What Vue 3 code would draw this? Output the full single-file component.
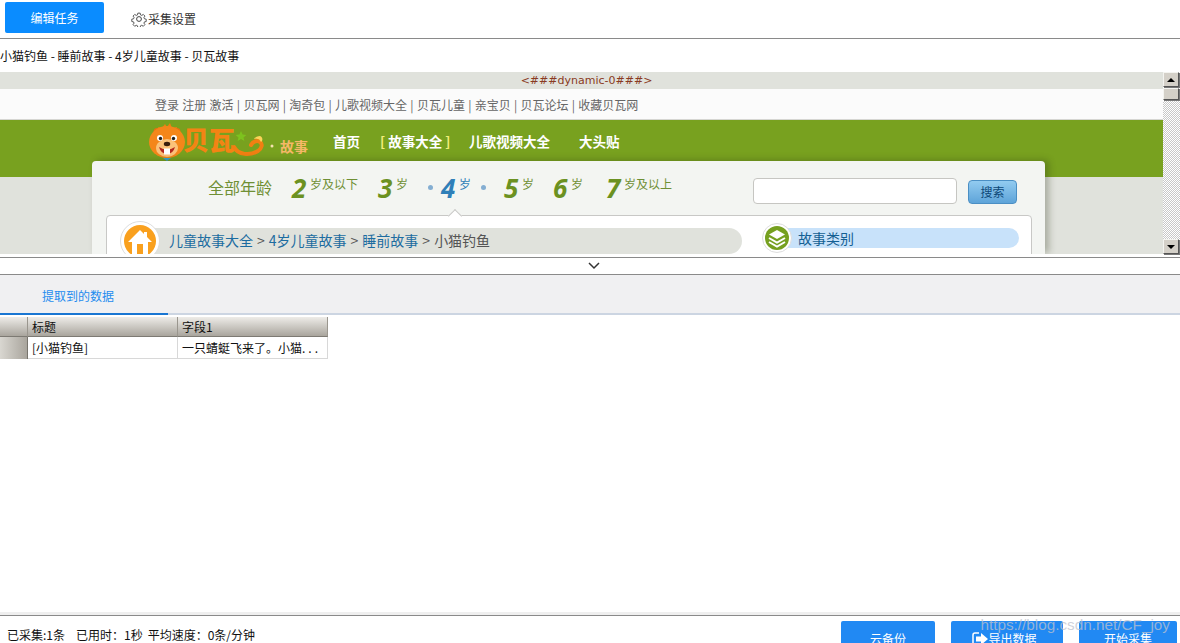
<script setup>
const links = ['贝瓦网', '淘奇包', '儿歌视频大全', '贝瓦儿童', '亲宝贝', '贝瓦论坛', '收藏贝瓦网']
const ages = [
  { n: '2', t: '岁及以下' },
  { n: '3', t: '岁' },
  { dot: true },
  { n: '4', t: '岁', on: true },
  { dot: true },
  { n: '5', t: '岁' },
  { n: '6', t: '岁' },
  { n: '7', t: '岁及以上' }
]
</script>

<template>
  <div class="app">
    <header class="toolbar">
      <button class="edit">编辑任务</button>
      <div class="settings">
        <svg class="gear" width="16" height="16" viewBox="0 0 24 24" fill="none" stroke="#444" stroke-width="1.5" stroke-linejoin="round">
          <path d="M10 2h4l.6 3 2.1.9 2.6-1.7 2.8 2.8-1.7 2.6.9 2.1 3 .6v4l-3 .6-.9 2.1 1.7 2.6-2.8 2.8-2.6-1.7-2.1.9-.6 3h-4l-.6-3-2.1-.9-2.6 1.7-2.8-2.8 1.7-2.6-.9-2.1-3-.6v-4l3-.6.9-2.1-1.7-2.6 2.8-2.8 2.6 1.7 2.1-.9z" transform="translate(12 12) scale(.88) translate(-12 -12)"/>
          <circle cx="12" cy="12" r="3.6"/>
        </svg>
        <span>采集设置</span>
      </div>
    </header>

    <div class="title">小猫钓鱼 - 睡前故事 - 4岁儿童故事 - 贝瓦故事</div>

    <section class="browser">
      <div class="viewport">
        <div class="dynamic">&lt;###dynamic-0###&gt;</div>
        <div class="toplinks">
          <span>登录 注册 激活</span>
          <span v-for="l in links" :key="l"> | {{ l }}</span>
        </div>
        <div class="green">
          <svg class="logo" width="164" height="40" viewBox="0 0 164 40">
            <path d="M22 2l2 5 5-1-1 5H12l-2-5 4 1 3-4 2 3z" fill="#f07f13"/>
            <ellipse cx="9" cy="11" rx="3.5" ry="4" fill="#e96f10"/>
            <ellipse cx="29" cy="11" rx="3.5" ry="4" fill="#e96f10"/>
            <ellipse cx="19" cy="21" rx="18" ry="16" fill="#f4861a"/>
            <ellipse cx="19" cy="27" rx="11" ry="9" fill="#fbc27a"/>
            <circle cx="12" cy="17" r="3" fill="#fff"/>
            <circle cx="26" cy="17" r="3" fill="#fff"/>
            <circle cx="12.5" cy="17.5" r="1.7" fill="#222"/>
            <circle cx="25.5" cy="17.5" r="1.7" fill="#222"/>
            <ellipse cx="19" cy="23" rx="3.2" ry="2.2" fill="#3a1d0c"/>
            <path d="M11 26q8 5 16 0q-2 7-8 7t-8-7z" fill="#b3261e"/>
            <rect x="16" y="27.5" width="6" height="6" fill="#fff"/>
            <path d="M15 37h8l-4 3z" fill="#35a6d8"/>
            <text class="logo-word" x="35" y="29">贝瓦</text>
            <path d="M86 26c4 8 16 9 24 4 4-3 5-7 2-9-2-2-7-1-9 3" fill="none" stroke="#f17f12" stroke-width="4" stroke-linecap="round"/>
            <path d="M112 15c-2 0-5 1-6 3 3-1 6 0 7 3 2-1 2-5-1-6z" fill="#fbd35a"/>
            <path d="M93 10l1.600 3.500 3.800.4-2.900 2.500.9 3.700-3.400-2-3.400 2 .9-3.700-2.900-2.500 3.800-.4z" fill="#7dc21e"/>
            <circle cx="124" cy="25" r="1.500" fill="#f5e3b0"/>
            <text class="logo-sub" x="132" y="31">故事</text>
          </svg>
          <nav class="nav">
            <a>首页</a>
            <a class="cur"><i>[</i> 故事大全 <i>]</i></a>
            <a>儿歌视频大全</a>
            <a>大头贴</a>
          </nav>
        </div>
        <div class="stage">
          <div class="card">
            <div class="ages-row">
              <div class="ages">
                <span class="all">全部年龄</span>
                <template v-for="(a, i) in ages" :key="i">
                  <span v-if="a.dot" class="dot"></span>
                  <span v-else class="age" :class="{ on: a.on }"><b>{{ a.n }}</b><em>{{ a.t }}</em></span>
                </template>
              </div>
              <div class="search">
                <div class="input"></div>
                <button class="go">搜索</button>
              </div>
            </div>
            <div class="panel">
              <span class="notch"></span>
              <div class="crumb">
                <span class="home">
                  <svg width="32" height="32" viewBox="0 0 32 32">
                    <circle cx="16" cy="16" r="16" fill="#f9a01e"/>
                    <path d="M16 5L4 17h4v15h16V17h4L23 12V7h-3v2z" fill="#fff"/>
                    <rect x="13" y="19" width="6" height="13" fill="#f9a01e"/>
                  </svg>
                </span>
                <div class="pill">
                  <a>儿童故事大全</a><s>&gt;</s><a>4岁儿童故事</a><s>&gt;</s><a>睡前故事</a><s>&gt;</s><span>小猫钓鱼</span>
                </div>
              </div>
              <div class="cat">
                <span class="stack">
                  <svg width="24" height="24" viewBox="0 0 24 24">
                    <circle cx="12" cy="12" r="12" fill="#76a020"/>
                    <path d="M12 4l8 4.500-8 4.500-8-4.500z" fill="#fff"/>
                    <path d="M4 12l8 4.500 8-4.500M4 16l8 4.500 8-4.500" fill="none" stroke="#fff" stroke-width="2"/>
                  </svg>
                </span>
                <div class="catpill">故事类别</div>
              </div>
            </div>
          </div>
        </div>
      </div>
      <div class="scrollbar">
        <span class="sb-btn"><i class="up"></i></span>
        <span class="sb-btn thumb"></span>
        <span class="track"></span>
        <span class="sb-btn"><i class="down"></i></span>
      </div>
    </section>

    <div class="collapse">
      <svg width="12" height="8" viewBox="0 0 12 8" fill="none" stroke="#333" stroke-width="1.500"><path d="M1 1l5 5 5-5"/></svg>
    </div>

    <div class="tabs"><div class="tab">提取到的数据</div></div>

    <div class="grid">
      <div class="row head">
        <span class="rh"></span><span class="c">标题</span><span class="c">字段1</span>
      </div>
      <div class="row body">
        <span class="rh"></span><span class="c">[小猫钓鱼]</span><span class="c">一只蜻蜓飞来了。小猫<i class="more">...</i></span>
      </div>
    </div>

    <footer class="status">
      <div class="stats">
        <span>已采集:1条</span>
        <span>已用时：1秒</span>
        <span>平均速度：0条/分钟</span>
      </div>
      <div class="actions">
        <button class="b1">云备份</button>
        <button class="b2">
          <svg width="16" height="16" viewBox="0 0 16 16">
            <path d="M7 2H3a2 2 0 0 0-2 2v8a2 2 0 0 0 2 2h4" fill="none" stroke="#fff" stroke-width="1.500"/>
            <path d="M4 5.500h5V2l7 6-7 6v-3.500H4z" fill="#fff"/>
          </svg>
          <span>导出数据</span>
        </button>
        <button class="b3">开始采集</button>
      </div>
    </footer>
    <div class="watermark">https://blog.csdn.net/CF_joy</div>
  </div>
</template>

<style>
html, body { margin: 0; background: #fff; overflow: hidden; }
</style>

<style scoped>
.app {
  position: relative;
  width: 1180px;
  height: 643px;
  overflow: hidden;
  display: flex;
  flex-direction: column;
  background: #fff;
  color: #111;
  font: 12px/16px "Noto Sans CJK SC", sans-serif;
}
button { font: inherit; border: 0; padding: 0; color: #fff; }

.toolbar {
  height: 38px;
  flex: none;
  display: flex;
  align-items: flex-start;
  padding: 2px 0 0 5px;
  box-sizing: content-box;
  height: 36px;
  border-bottom: 1px solid #8a8a8a;
}
.edit {
  width: 99px;
  height: 31px;
  background: #0a8cff;
  border-radius: 2px;
}
.settings {
  margin: 9px 0 0 27px;
  display: flex;
  align-items: center;
  color: #333;
}
.gear { margin-right: 1px; }

.title {
  height: 33px;
  flex: none;
  line-height: 34px;
  color: #111;
}

.browser {
  height: 182px;
  flex: none;
  display: flex;
}
.viewport {
  width: 1163px;
  overflow: hidden;
  background: #e0e2dc;
}
.dynamic {
  height: 17px;
  line-height: 17px;
  text-align: center;
  color: #8a3a22;
  font: 11px/17px "DejaVu Sans", sans-serif;
  padding-left: 10px;
}
.toplinks {
  height: 30px;
  padding-left: 155px;
  line-height: 31px;
  background: #fbfbfb;
  border-bottom: 1px solid #d6d6d2;
  color: #666;
  word-spacing: .6px;
  white-space: pre;
}
.green {
  height: 57px;
  display: flex;
  align-items: flex-start;
  padding: 1px 0 0 148px;
  box-sizing: border-box;
  background: #78a11f;
}
.logo { flex: none; }
.logo-word { font: 900 26px "Noto Sans CJK SC", sans-serif; fill: #f38414; }
.logo-sub { font: 700 14px "Noto Sans CJK SC", sans-serif; fill: #f5b868; }
.nav {
  display: flex;
  margin: 10px 0 0 21px;
  color: #fff;
  font: 700 13.500px/20px "Noto Sans CJK SC", sans-serif;
}
.nav a { display: block; }
.nav a:nth-child(1) { width: 47px; }
.nav a:nth-child(2) { width: 89px; white-space: pre; }
.nav a:nth-child(3) { width: 110px; }
.nav i { font-style: normal; color: #f3ee7a; }

.stage { margin-top: -16px; padding-left: 92px; }
.card {
  position: relative;
  width: 953px;
  height: 93px;
  background: #f3f5f2;
  border-radius: 4px 4px 0 0;
  box-shadow: 4px -1px 7px rgba(40, 50, 20, .3);
}
.ages-row {
  height: 54px;
  display: flex;
}
.ages {
  display: grid;
  grid-template-columns: 84px 86px 50px 13px 40px 23px 49px 53px auto;
  padding: 15px 0 0 116px;
  width: 645px;
  box-sizing: border-box;
  align-items: start;
}
.all { color: #6f8f34; font-size: 16px; line-height: 22px; }
.age { display: flex; align-items: flex-start; color: #6b9121; white-space: nowrap; }
.age b {
  font: italic 700 26px/24px "Open Sans", sans-serif;
  width: 18px;
  flex: none;
}
.age em { font: normal 12px/16px "Noto Sans CJK SC", sans-serif; color: #6f8f34; }
.age.on, .age.on em { color: #2f7fb8; }
.dot {
  width: 5px;
  height: 5px;
  margin-top: 9px;
  border-radius: 50%;
  background: #84aed2;
}
.search { display: flex; margin-left: 16px; padding-top: 17px; }
.input {
  width: 202px;
  height: 24px;
  background: #fff;
  border: 1px solid #c6c6c2;
  border-radius: 4px;
}
.go {
  margin: 2px 0 0 11px;
  width: 49px;
  height: 24px;
  box-sizing: border-box;
  border: 1px solid #4b8fc4;
  border-radius: 4px;
  background: linear-gradient(#92cbf0, #5ea4d9);
  color: #0d4878;
}
.panel {
  position: relative;
  margin-left: 14px;
  width: 926px;
  height: 60px;
  box-sizing: border-box;
  background: #fff;
  border: 1px solid #c8c8c6;
  border-radius: 4px 4px 0 0;
  display: flex;
}
.notch {
  position: absolute;
  left: 343px;
  top: -5px;
  width: 9px;
  height: 9px;
  background: #fff;
  border: 1px solid #c8c8c6;
  border-width: 1px 0 0 1px;
  transform: rotate(45deg);
}
.crumb { position: relative; display: flex; width: 622px; margin-left: 13px; margin-top: 5px; }
.home {
  position: relative;
  z-index: 1;
  flex: none;
  width: 40px;
  height: 40px;
  box-sizing: border-box;
  padding: 3px;
  background: #fff;
  border: 1px solid #ddd;
  border-radius: 50%;
}
.home svg { display: block; }
.pill {
  margin: 7px 0 0 -20px;
  flex: 1;
  height: 26px;
  padding-left: 29px;
  line-height: 25px;
  font-size: 14px;
  background: #e0e2dc;
  border-radius: 0 13px 13px 0;
  color: #555;
  white-space: nowrap;
}
.pill a { color: #1c6ca0; }
.pill s { text-decoration: none; margin: 0 4px; }
.cat { display: flex; margin: 7px 0 0 20px; }
.stack {
  position: relative;
  z-index: 1;
  flex: none;
  width: 30px;
  height: 30px;
  box-sizing: border-box;
  padding: 2px;
  background: #fff;
  border: 1px solid #ddd;
  border-radius: 50%;
}
.stack svg { display: block; }
.catpill {
  margin: 5px 0 0 -4px;
  width: 231px;
  height: 20px;
  padding-left: 10px;
  box-sizing: border-box;
  background: #c8e2fa;
  border-radius: 0 10px 10px 0;
  font-size: 14px;
  line-height: 20px;
  color: #145f92;
}

.scrollbar {
  width: 17px;
  display: flex;
  flex-direction: column;
}
.sb-btn {
  width: 16px;
  height: 15px;
  flex: none;
  display: flex;
  align-items: center;
  justify-content: center;
  box-sizing: border-box;
  background: #d4d0c8;
  border: 1px solid;
  border-color: #f4f4f0 #555 #555 #f4f4f0;
  box-shadow: 1px 1px 0 #777;
}
.thumb { height: 12px; margin-top: 1px; }
.track {
  flex: 1;
  margin-top: 1px;
  background: repeating-conic-gradient(#c8c8c8 0 25%, #fff 0 50%) 0 0 / 2px 2px;
}
.up, .down { width: 0; height: 0; border: 4px solid transparent; border-left-width: 4px; }
.up { border-bottom: 4px solid #000; border-top-width: 0; }
.down { border-top: 4px solid #000; border-bottom-width: 0; }

.collapse {
  flex: none;
  height: 16px;
  margin-top: 3px;
  border-top: 1px solid #8a8a8a;
  border-bottom: 1px solid #8a8a8a;
  display: flex;
  align-items: center;
  justify-content: center;
  padding-left: 8px;
}
.tabs {
  flex: none;
  height: 38px;
  background: #f0f0f2;
  border-bottom: 2px solid #ccd5e2;
}
.tab {
  width: 168px;
  height: 38px;
  box-sizing: content-box;
  border-bottom: 2px solid #1976d2;
  padding-left: 42px;
  box-sizing: border-box;
  height: 40px;
  line-height: 42px;
  color: #1e8cef;
}
.grid { flex: 1; padding-top: 2px; }
.row { display: flex; width: 328px; }
.rh { width: 28px; flex: none; box-sizing: border-box; }
.c {
  width: 150px;
  box-sizing: border-box;
  padding-left: 4px;
  white-space: nowrap;
}
.head { height: 20px; line-height: 19px; }
.head .rh, .head .c {
  background: linear-gradient(#eeece8, #a9a59d);
  border-right: 1px solid #9a968e;
  border-bottom: 1px solid #7d7a73;
}
.body { height: 22px; line-height: 21px; }
.body .rh { background: linear-gradient(90deg, #d9d7d1, #a9a59d); border-right: 1px solid #77746d; }
.body .c { border-right: 1px solid #d8d8d8; border-bottom: 1px solid #d8d8d8; }
.more { font-style: normal; letter-spacing: 3px; }

.status {
  flex: none;
  height: 27px;
  border-top: 1px solid #8a8a8a;
  box-shadow: 0 -3px 0 #efefef;
  display: flex;
  justify-content: space-between;
}
.stats { display: flex; padding: 11px 0 0 7px; gap: 11px; }
.stats span:last-child { margin-left: -6px; }
.actions { display: flex; gap: 16px; padding: 5px 3px 0 0; align-items: flex-start; }
.actions button {
  height: 32px;
  flex: none;
  background: #2189f3;
  border-radius: 2px;
  display: flex;
  align-items: center;
  justify-content: center;
  padding-top: 3px;
  box-sizing: border-box;
}
.b1 { width: 94px; }
.b2 { width: 112px; }
.b2 span { margin-right: 5px; }
.b3 { width: 98px; }
.watermark {
  position: absolute;
  right: 10px;
  top: 616px;
  font: 15.300px/18px "Liberation Sans", sans-serif;
  color: rgba(190, 194, 205, .75);
  pointer-events: none;
}
</style>
